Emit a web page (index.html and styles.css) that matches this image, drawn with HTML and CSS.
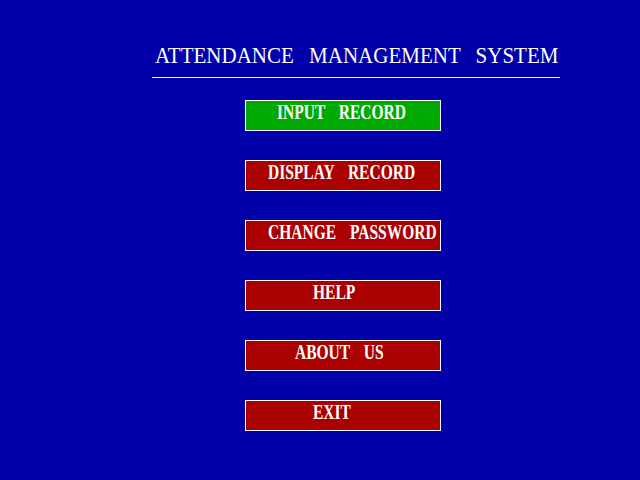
FILE: index.html
```html
<!DOCTYPE html>
<html>
<head>
<meta charset="utf-8">
<link rel="stylesheet" href="styles.css">
</head>
<body>
<div class="screen">
  <h1 class="title"><span class="title-text">ATTENDANCE MANAGEMENT SYSTEM</span></h1>
  <div class="rule"></div>
  <nav class="menu">
    <div class="btn btn-green"><span class="label pad-input">INPUT RECORD</span></div>
    <div class="btn"><span class="label pad-display">DISPLAY RECORD</span></div>
    <div class="btn"><span class="label pad-display">CHANGE PASSWORD</span></div>
    <div class="btn"><span class="label pad-help">HELP</span></div>
    <div class="btn"><span class="label pad-about">ABOUT US</span></div>
    <div class="btn"><span class="label pad-help">EXIT</span></div>
  </nav>
</div>
</body>
</html>
```

FILE: styles.css
```css
html, body {
  margin: 0;
  padding: 0;
  background: #0000aa;
}
.screen {
  width: 640px;
  height: 480px;
  background: #0000aa;
  display: flex;
  flex-direction: column;
  font-family: "Liberation Serif", "Times New Roman", serif;
  color: #ffffff;
}
.title {
  margin: 0;
  padding: 44px 0 0 155px;
  height: 26px;
  font-weight: normal;
  font-size: 21px;
  line-height: 21px;
}
.title-text {
  display: inline-block;
  word-spacing: 10px;
  transform: scaleY(1.1);
  transform-origin: left top;
  white-space: nowrap;
}
.rule {
  margin: 7px 0 0 152px;
  width: 408px;
  height: 1px;
  background: #ffffff;
}
.menu {
  display: flex;
  flex-direction: column;
  gap: 29px;
  margin: 22px 0 0 245px;
}
.btn {
  box-sizing: border-box;
  width: 196px;
  height: 31px;
  border: 1px solid #ffffff;
  background: #aa0000;
  display: flex;
  align-items: center;
}
.btn-green {
  background: #00aa00;
}
.label {
  display: inline-block;
  font-weight: bold;
  font-size: 15.5px;
  line-height: 15px;
  word-spacing: 10px;
  white-space: nowrap;
  transform: scaleY(1.36);
  margin-top: -9px;
}
.pad-input { margin-left: 31px; }
.pad-display { margin-left: 22px; }
.pad-help { margin-left: 67px; }
.pad-about { margin-left: 49px; }
```
